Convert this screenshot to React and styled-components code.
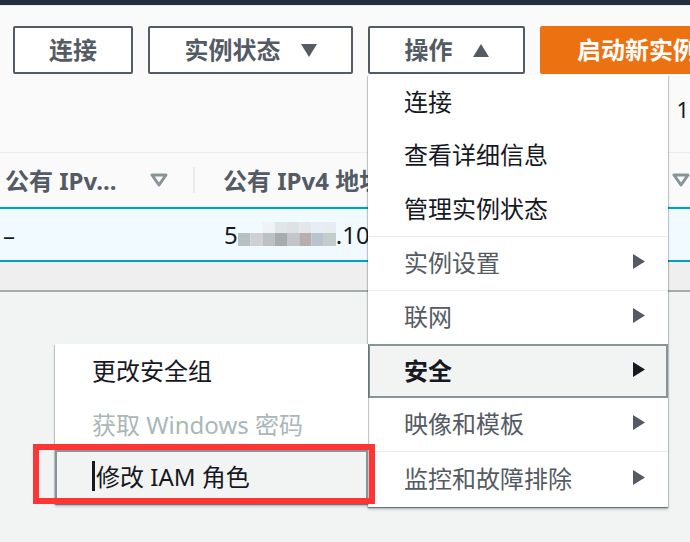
import React from "react";
import styled, { createGlobalStyle } from "styled-components";

const Global = createGlobalStyle`
  html, body { margin: 0; padding: 0; background: #f2f3f3; }
  * { box-sizing: border-box; }
`;

const FONT = `"Noto Sans", "Noto Sans CJK SC", sans-serif`;

const Page = styled.div`
  position: relative;
  width: 690px;
  height: 542px;
  overflow: hidden;
  background: #f2f3f3;
  font-family: ${FONT};
  color: #16191f;
`;

const TopBar = styled.div`
  height: 6px;
  background: #232f3e;
  border-bottom: 1px solid #eaeded;
`;

const Toolbar = styled.div`
  height: 146px;
  background: #fafafa;
  padding: 20px 0 0 13px;
  display: flex;
  flex-direction: column;
  gap: 22px;
`;

const ButtonRow = styled.div`
  display: flex;
  gap: 15px;
  height: 48px;
`;

const Button = styled.button`
  flex: 0 0 auto;
  width: ${(p) => p.$w}px;
  height: 48px;
  display: flex;
  align-items: center;
  justify-content: ${(p) => (p.$primary ? "flex-start" : "center")};
  gap: 20px;
  padding: ${(p) => (p.$primary ? "0 0 0 35px" : "0")};
  border: 2px solid ${(p) => (p.$primary ? "#ec7211" : "#545b64")};
  border-radius: 2px;
  background: ${(p) => (p.$primary ? "#ec7211" : "#ffffff")};
  color: ${(p) => (p.$primary ? "#ffffff" : "#545b64")};
  font-family: ${FONT};
  font-size: 24px;
  font-weight: 700;
  white-space: nowrap;
  line-height: 1;
`;

const PagerRow = styled.div`
  display: flex;
  justify-content: flex-end;
  padding-right: 1px;
  font-size: 22px;
  line-height: 26px;
  color: #16191f;
`;

const HeaderRow = styled.div`
  height: 55px;
  background: #fafafa;
  border-top: 1px solid #eaeded;
  border-bottom: 1px solid #eaeded;
  display: flex;
  align-items: center;
`;

const HeadCell = styled.div`
  flex: 0 0 ${(p) => p.$w}px;
  display: flex;
  align-items: center;
  justify-content: space-between;
  padding: 0 ${(p) => p.$pr}px 0 ${(p) => p.$pl}px;
  font-size: 24px;
  font-weight: 700;
  color: #545b64;
  white-space: nowrap;
  height: 100%;
`;

const Divider = styled.div`
  flex: 0 0 2px;
  height: 26px;
  background: #eaeded;
`;

const DataRow = styled.div`
  height: 55px;
  background: #f1faff;
  border-top: 2px solid #00a1c9;
  border-bottom: 2px solid #00a1c9;
  display: flex;
  align-items: center;
  font-size: 24px;
  color: #16191f;
`;

const DataCell = styled.div`
  flex: 0 0 ${(p) => p.$w}px;
  padding-left: ${(p) => p.$pl}px;
  display: flex;
  align-items: center;
  white-space: nowrap;
`;

const Band = styled.div`
  height: 30px;
  background: #efefef;
  border-bottom: 2px solid #a4acae;
`;

const Menu = styled.div`
  position: absolute;
  left: ${(p) => p.$x}px;
  top: ${(p) => p.$y}px;
  width: ${(p) => p.$w}px;
  background: #ffffff;
  box-shadow: 0 1px 1px 0 rgba(0, 28, 36, 0.3), 1px 1px 1px 0 rgba(0, 28, 36, 0.15),
    -1px 1px 1px 0 rgba(0, 28, 36, 0.15), 0 3px 2px rgba(0, 28, 36, 0.15);
  display: flex;
  flex-direction: column;
`;

const Item = styled.div`
  height: ${(p) => p.$h || 54}px;
  flex: 0 0 auto;
  display: flex;
  align-items: center;
  justify-content: space-between;
  padding: 0 ${(p) => (p.$active ? 21 : 23)}px 3px
    ${(p) => (p.$pl || 36) - (p.$active ? 2 : 0)}px;
  font-size: 24px;
  white-space: nowrap;
  font-weight: ${(p) => (p.$bold ? 700 : 400)};
  color: ${(p) => (p.$disabled ? "#aab7b8" : p.$muted ? "#545b64" : "#16191f")};
  background: ${(p) => (p.$active ? "#f2f3f3" : "transparent")};
  border: ${(p) => (p.$active ? "2px solid #879596" : "none")};
  margin: ${(p) => (p.$active ? "-1px 0 0 0" : "0")};
`;

const Sep = styled.div`
  height: 1px;
  background: #eaeded;
`;

const Label = styled.span`
  display: flex;
  align-items: center;
`;

const Caret = styled.span`
  display: inline-block;
  width: 3px;
  height: 30px;
  background: #16191f;
  margin-right: 1px;
`;

const Annotation = styled.div`
  position: absolute;
  left: 33px;
  top: 444px;
  width: 342px;
  height: 60px;
  border: 6px solid #ff3535;
`;

const Tri = ({ dir, color = "#545b64", w = 16, h = 13 }) => {
  const pts =
    dir === "down"
      ? `0,0 ${w},0 ${w / 2},${h}`
      : dir === "up"
      ? `0,${h} ${w},${h} ${w / 2},0`
      : `0,0 ${w},${h / 2} 0,${h}`;
  return (
    <svg width={w} height={h} viewBox={`0 0 ${w} ${h}`} style={{ display: "block" }}>
      <polygon points={pts} fill={color} />
    </svg>
  );
};

const Filter = () => (
  <svg width="18" height="14" viewBox="0 0 18 14" style={{ display: "block" }}>
    <polygon points="2,2 16,2 9,12" fill="none" stroke="#879596" strokeWidth="3" strokeLinejoin="round" />
  </svg>
);

const Blur = () => {
  const top = ["#f1faff", "#f1faff", "#eef3f7", "#e2e5e8", "#dfe2e5", "#e3e7ea", "#e6edf3", "#e6ecef"];
  const bot = ["#b8c0c1", "#cfd0d4", "#bcbfc3", "#a7adad", "#c2c6cb", "#b8aeab", "#b9c3cc", "#c4cccb"];
  return (
    <svg width="98" height="26" viewBox="0 0 98 26" style={{ display: "block" }}>
      {top.map((c, i) => (
        <rect key={"t" + i} x={i * 12.25} y="0" width="12.25" height="11" fill={c} />
      ))}
      {bot.map((c, i) => (
        <rect key={"b" + i} x={i * 12.25} y="11" width="12.25" height="13" fill={c} />
      ))}
    </svg>
  );
};

export default function App() {
  return (
    <Page>
      <Global />
      <TopBar />
      <Toolbar>
        <ButtonRow>
          <Button $w={120}>连接</Button>
          <Button $w={205}>
            实例状态 <Tri dir="down" />
          </Button>
          <Button $w={157}>
            操作 <Tri dir="up" />
          </Button>
          <Button $w={220} $primary>
            启动新实例
          </Button>
        </ButtonRow>
        <PagerRow>
          <span>1</span>
        </PagerRow>
      </Toolbar>
      <HeaderRow>
        <HeadCell $w={193} $pl={5} $pr={25}>
          公有 IPv... <Filter />
        </HeadCell>
        <Divider />
        <HeadCell $w={495} $pl={28} $pr={0}>
          公有 IPv4 地址 <Filter />
        </HeadCell>
      </HeaderRow>
      <DataRow>
        <DataCell $w={195} $pl={3}>–</DataCell>
        <DataCell $w={400} $pl={29}>
          5<Blur />.10
        </DataCell>
      </DataRow>
      <Band />

      <Menu $x={368} $y={75} $w={300}>
        <Item $h={53.5}>连接</Item>
        <Item $h={53.5}>查看详细信息</Item>
        <Item $h={53.5}>管理实例状态</Item>
        <Sep />
        <Item $h={53} $muted>
          实例设置 <Tri dir="right" w={12} h={15} />
        </Item>
        <Sep />
        <Item $h={53} $muted>
          联网 <Tri dir="right" w={12} h={15} />
        </Item>
        <Sep />
        <Item $h={54} $active $bold>
          安全 <Tri dir="right" w={12} h={15} color="#16191f" />
        </Item>
        <Item $h={53} $muted>
          映像和模板 <Tri dir="right" w={12} h={15} />
        </Item>
        <Sep />
        <Item $h={55} $muted>
          监控和故障排除 <Tri dir="right" w={12} h={15} />
        </Item>
      </Menu>

      <Menu $x={55} $y={344} $w={313}>
        <Item $pl={37} $h={54}>更改安全组</Item>
        <Item $pl={37} $h={53} $disabled>
          获取 Windows 密码
        </Item>
        <Item $pl={37} $h={54} $active>
          <Label>
            <Caret />
            修改 IAM 角色
          </Label>
        </Item>
      </Menu>

      <Annotation />
    </Page>
  );
}
